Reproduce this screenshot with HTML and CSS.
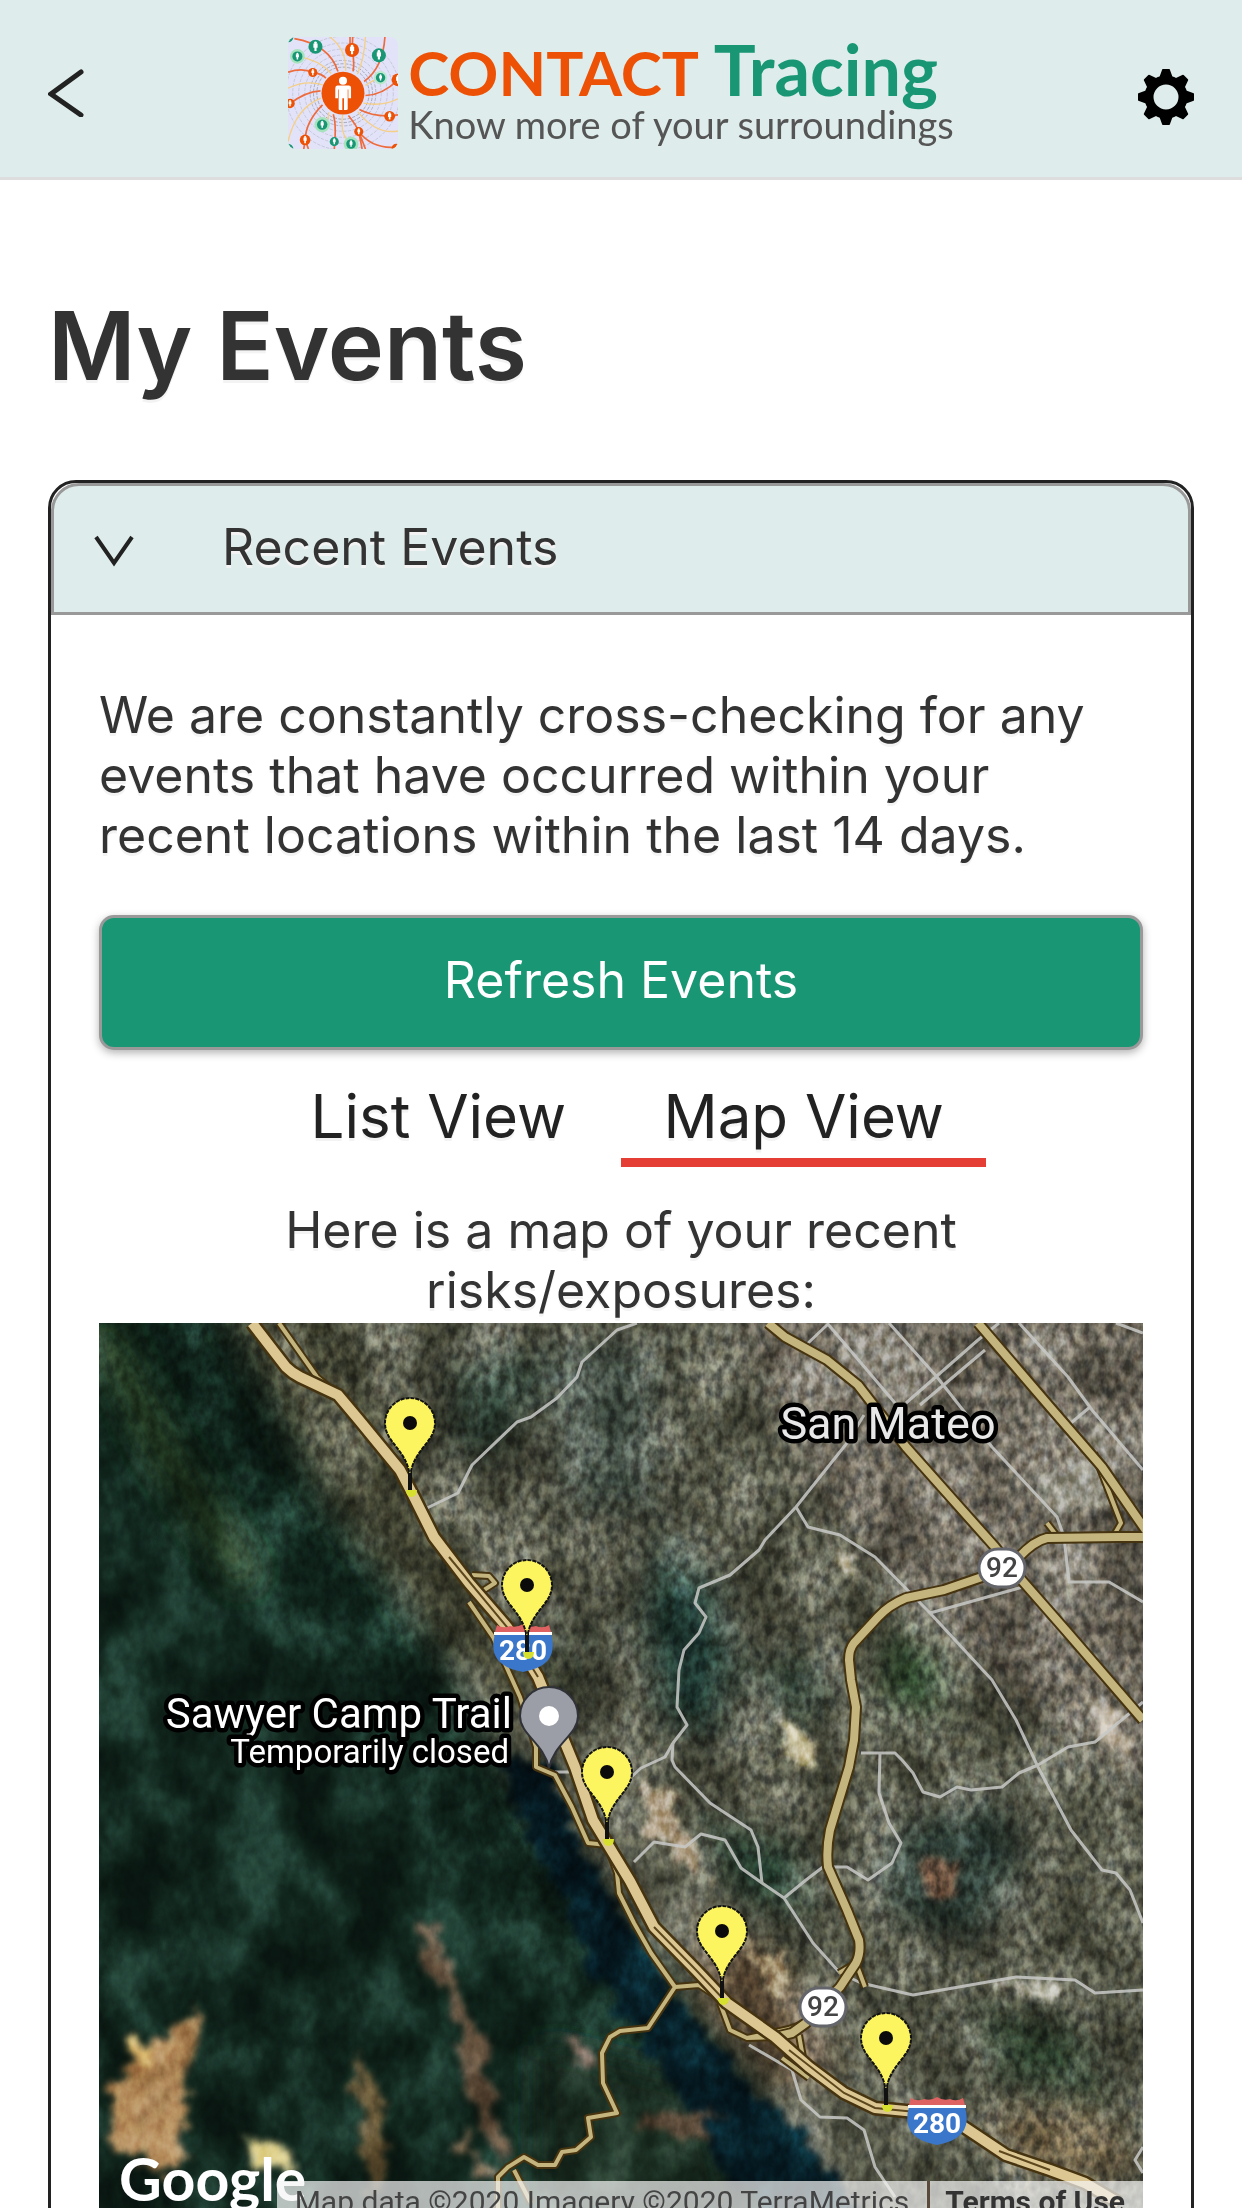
FILE: index.html
```html
<!DOCTYPE html>
<html lang="en">
<head>
    <meta charset="UTF-8">
    <meta name="viewport" content="width=device-width, initial-scale=1">
    <title>My Events</title>
    <link rel="stylesheet" href="styles.css">
</head>
<body>
<header class="header">
    <button class="icon-btn back" type="button" aria-label="Back">
        <svg width="36" height="48" viewBox="0 0 36 48"><path d="M33 3L3 25L33 46" fill="none" stroke="#222" stroke-width="5" stroke-linecap="round"/></svg>
    </button>
    <div class="logo">
        <svg class="logo-mark" width="110" height="112" viewBox="37 37 328 335" preserveAspectRatio="none">
            <defs>
                <clipPath id="logoClip"><rect x="37" y="37" width="328" height="335" rx="24"/></clipPath>
                <g id="person"><circle r="20"/><path d="M-6 -9H6V3H3V12H-3V3H-6Z" fill="#fff"/><circle cy="-11" r="4" fill="#fff"/></g>
            </defs>
            <g clip-path="url(#logoClip)">
                <rect x="37" y="37" width="328" height="335" fill="#e2e3f9"/>
                <g fill="none" stroke="#b9bccb" stroke-width="2" stroke-dasharray="10 4">
                    <circle cx="201" cy="205" r="78" stroke="#8c8e9b"/><circle cx="201" cy="205" r="88" stroke="#8c8e9b"/><circle cx="201" cy="205" r="98" stroke="#9c9eab"/>
                    <circle cx="201" cy="205" r="114"/><circle cx="201" cy="205" r="132"/><circle cx="201" cy="205" r="150"/><circle cx="201" cy="205" r="170"/>
                </g>
                <g fill="none" stroke="#f6cf86" stroke-width="4">
                    <path d="M66 95Q130 105 166 146M162 37Q212 75 209 138M268 37Q265 100 244 148M37 190Q90 165 140 180M37 350Q60 250 135 220M262 235Q320 245 365 222M245 260Q300 330 365 318M200 270Q190 330 225 357M140 300Q160 290 158 262M313 160Q290 165 268 182"/>
                </g>
                <g fill="none" stroke="#ee6b3d" stroke-width="5">
                    <path d="M56 42Q160 60 186 140M228 76Q236 110 231 140M222 37V76M230 37L228 76M326 37Q320 130 264 170M37 142Q80 128 111 143Q140 148 150 160M268 212Q320 210 365 165M134 198Q90 200 43 236M250 254Q300 280 365 270M140 240Q90 290 88 345M84 372L88 345L98 372M172 268Q182 300 175 372M217 272Q240 300 248 320Q290 375 365 366M248 320L258 372M248 320L268 372"/>
                </g>
                <g fill="#199775">
                    <circle cx="65" cy="95" r="22" fill="#a5e3bd"/><circle cx="139" cy="299" r="23" fill="#a5e3bd"/><circle cx="225" cy="357" r="22" fill="#a5e3bd"/><circle cx="313" cy="159" r="20" fill="#b9e8cd"/>
                    <use href="#person" transform="translate(119 66) scale(1.05)"/>
                    <use href="#person" transform="translate(65 95) scale(.75)"/>
                    <use href="#person" transform="translate(308 92) scale(1.05)"/>
                    <use href="#person" transform="translate(313 159) scale(.7)"/>
                    <use href="#person" transform="translate(139 299) scale(.78)"/>
                    <use href="#person" transform="translate(175 350) scale(.68)"/>
                    <use href="#person" transform="translate(225 357) scale(.72)"/>
                    <circle cx="37" cy="372" r="16"/><circle cx="37" cy="37" r="16"/>
                </g>
                <g fill="#ec5105">
                    <use href="#person" transform="translate(228 76) scale(1.05)"/>
                    <use href="#person" transform="translate(111 143) scale(.68)"/>
                    <use href="#person" transform="translate(365 165) scale(.95)"/>
                    <use href="#person" transform="translate(43 236) scale(.7)"/>
                    <use href="#person" transform="translate(340 274) scale(.8)"/>
                    <use href="#person" transform="translate(88 345) scale(.8)"/>
                    <use href="#person" transform="translate(248 320) scale(.68)"/>
                    <circle cx="360" cy="370" r="14"/>
                    <circle cx="201" cy="205" r="64"/>
                </g>
                <circle cx="201" cy="168" r="12" fill="#fff"/>
                <path d="M184 182H218Q225 182 225 190V220H217V194H215V252Q215 255 211 255H204V220H199V255H191Q188 255 188 252V194H186V220H178V190Q178 182 184 182Z" fill="#fff"/>
            </g>
        </svg>
        <div class="logo-text">
            <div class="logo-name"><span class="orange">CONTACT</span> Tracing</div>
            <div class="logo-tag">Know more of your surroundings</div>
        </div>
    </div>
    <button class="icon-btn settings" type="button" aria-label="Settings">
        <svg width="56" height="56" viewBox="-28 -28 56 56">
            <defs><path id="tooth" d="M-8 -16L-4 -27Q-4 -28 -3 -28H3Q4 -28 4 -27L8 -16Z"/></defs>
            <circle r="17" fill="none" stroke="#000" stroke-width="9"/>
            <use href="#tooth"/><use href="#tooth" transform="rotate(45)"/><use href="#tooth" transform="rotate(90)"/><use href="#tooth" transform="rotate(135)"/>
            <use href="#tooth" transform="rotate(180)"/><use href="#tooth" transform="rotate(225)"/><use href="#tooth" transform="rotate(270)"/><use href="#tooth" transform="rotate(315)"/>
        </svg>
    </button>
</header>

<main class="content">
    <h1>My Events</h1>

    <section class="card">
        <button class="card-head" type="button" aria-expanded="true">
            <svg width="40" height="32" viewBox="0 0 40 32"><path d="M2 2L20 28L38 2" fill="none" stroke="#222" stroke-width="4"/></svg>
            <span>Recent Events</span>
        </button>
        <div class="card-body">
            <p class="intro">We are constantly cross-checking for any events that have occurred within your recent locations within the last 14 days.</p>
            <button class="refresh" type="button">Refresh Events</button>
            <div class="tabs">
                <button class="tab" type="button">List View</button>
                <button class="tab active" type="button">Map View</button>
            </div>
            <p class="caption">Here is a map of your recent risks/exposures:</p>
            <div class="map">
                <svg viewBox="0 0 1044 900" role="img" aria-label="Map of recent exposures">
                    <defs>
                        <filter id="soft" x="-20%" y="-20%" width="140%" height="140%"><feGaussianBlur stdDeviation="16"/></filter>
                        <filter id="edge" x="-20%" y="-20%" width="140%" height="140%" color-interpolation-filters="sRGB">
                            <feTurbulence type="fractalNoise" baseFrequency="0.05" numOctaves="3" seed="4" result="n"/>
                            <feDisplacementMap in="SourceGraphic" in2="n" scale="34" xChannelSelector="R" yChannelSelector="G"/>
                            <feGaussianBlur stdDeviation="3"/>
                        </filter>
                        <filter id="grain" x="0" y="0" width="100%" height="100%" color-interpolation-filters="sRGB">
                            <feTurbulence type="fractalNoise" baseFrequency="0.12 0.08" numOctaves="3" seed="8"/>
                            <feColorMatrix values="2 .3 0 0 -.65  2 .1 0 0 -.55  2 0 .2 0 -.61  0 0 0 0 1"/>
                        </filter>
                        <filter id="terrain" x="0" y="0" width="100%" height="100%" color-interpolation-filters="sRGB">
                            <feTurbulence type="fractalNoise" baseFrequency="0.016 0.012" numOctaves="4" seed="21"/>
                            <feColorMatrix values="2.4 0 0 0 -.72  2.4 0 0 0 -.72  2.4 0 0 0 -.72  0 0 0 0 1"/>
                        </filter>
                        <linearGradient id="fade" x1="0" y1=".65" x2=".6" y2=".2">
                            <stop offset=".35" stop-color="#fff" stop-opacity=".3"/>
                            <stop offset=".7" stop-color="#fff"/>
                        </linearGradient>
                        <mask id="urban"><rect width="1044" height="900" fill="url(#fade)"/></mask>
                        <g id="pin">
                            <path d="M0 68V44" stroke="#111" stroke-width="4"/>
                            <path d="M0 54C-3 26 -25 20 -25 0A25 25 0 0 1 25 0C25 20 3 26 0 54Z" fill="#fcf55f" stroke="#111" stroke-width="2" stroke-dasharray="4 1"/>
                            <circle r="7" fill="#0b0b0b"/>
                            <path d="M-4 67H7Q7 74 1 74Q-4 73 -4 67Z" fill="#d8e02f"/>
                        </g>
                        <g id="i280">
                            <path d="M-28 10H28Q36 38 8 46L0 48L-8 46Q-36 38 -28 10Z" fill="#3a77ca"/>
                            <path d="M-28 8L-26 1Q-20 5 -13 2Q-6 4 0 0Q6 4 13 2Q20 5 26 1L28 8Z" fill="#df6262"/>
                            <path d="M-29 8H29V11H-29Z" fill="#fff"/>
                            <text class="shield" x="0" y="36">280</text>
                        </g>
                        <g id="r92">
                            <rect x="-23" y="-19" width="46" height="38" rx="19" fill="#fff" stroke="#63656b" stroke-width="3"/>
                            <text class="route" x="0" y="9">92</text>
                        </g>
                    </defs>

                    <!-- ground colours -->
                    <rect width="1044" height="900" fill="#11271e"/>
                    <g filter="url(#soft)">
                        <path d="M130 -40L260 180L400 430L520 590L640 740L760 960H1100V-40Z" fill="#5a5b4d"/>
                        <path d="M110 -40L230 180L350 330L430 420L480 400L300 120L230 -40Z" fill="#4c4d3a"/>
                        <path d="M0 0L60 120L150 260" stroke="#2a4328" stroke-width="30" fill="none"/>
                        <path d="M640 0L720 160L780 240L880 340L960 400L1100 500V-40H640Z" fill="#736e63"/>
                        <path d="M560 200L620 260L640 330L620 420L560 400L540 300Z" fill="#26423a"/>
                        <path d="M420 20L450 60L400 140L350 130L350 40Z" fill="#2f4035"/>
                        <path d="M640 340L720 320L740 380L690 420Z" fill="#2d3c32"/>
                        <path d="M790 300L850 340L840 400L780 380Z" fill="#304e33"/>
                        <path d="M800 500L900 470L930 540L880 620L800 600L770 560Z" fill="#32423a"/>
                        <path d="M860 680L980 700L1020 790L900 760Z" fill="#2d402f"/>
                        <path d="M590 490L700 520L720 600L640 580Z" fill="#274133"/>
                        <path d="M420 300L520 280L560 220L470 420Z" fill="#3d4236"/>
                        <path d="M440 20H560V190H470Z" fill="#414c42"/>
                        <path d="M600 590L680 640L740 740L690 770L600 690Z" fill="#6b5a45"/>
                        <path d="M880 790L1000 790L1044 850H940Z" fill="#6d5f45"/>
                        <path d="M440 720L600 760L640 900H440Z" fill="#20382a"/>
                    </g>
                    <g filter="url(#edge)">
                        <path d="M400 430L450 440L480 520L530 600L575 670L620 730L680 790L740 850L770 900H680L630 860L590 790L550 720L500 660L470 590L430 520Z" fill="#051a22"/>
                        <path d="M98 680L108 690L92 740L86 790L78 820L90 830L70 850L20 830L8 800L12 770L30 740L30 720L70 712Z" fill="#b8905f"/>
                        <path d="M30 720L58 718L40 745Z" fill="#e6cd8a"/>
                        <path d="M80 730L60 800M60 740L40 810M95 700L84 740" fill="none" stroke="#8a6238" stroke-width="6"/>
                        <path d="M150 820L168 815L194 830L190 850L155 848Z" fill="#e5d99b"/>
                        <path d="M318 600L335 600L350 650L385 720L395 780L412 840L395 835L370 770L360 700L325 640Z" fill="#6b5844"/>
                        <path d="M255 730L275 760L290 800L285 870H270L262 790Z" fill="#70603f"/>
                        <path d="M465 715L495 725L500 745L480 740Z" fill="#826a5d"/>
                        <path d="M365 800L380 840L400 845L385 860L360 820Z" fill="#88745a"/>
                        <path d="M545 455L570 470L590 520L610 560L580 540L550 500Z" fill="#b5a58c"/>
                        <path d="M680 390L715 420L710 450L685 430Z" fill="#d3ccae"/>
                        <path d="M640 610L690 640L690 680L650 640Z" fill="#b7a889"/>
                        <path d="M990 370L1020 400L1030 440L1000 410Z" fill="#c6bcac"/>
                        <path d="M820 535L860 535L850 575L825 570Z" fill="#79604d"/>
                        <path d="M540 790L620 790L590 815L540 815Z" fill="#5b4a39"/>
                        <path d="M735 220L755 235L755 255L740 245Z" fill="#c9c2ab"/>
                        <path d="M935 160L980 140L1010 150L1000 190L950 190Z" fill="#98968a"/>
                        <path d="M890 655L960 660L965 675L900 670Z" fill="#b6b4a5"/>
                    </g>
                    <rect class="relief" width="1044" height="900" filter="url(#terrain)"/>
                    <g mask="url(#urban)" class="noise"><rect width="1044" height="900" filter="url(#grain)"/></g>

                    <!-- small streets -->
                    <g class="street">
                        <path d="M538 0L518 7L483 39L478 54L458 75L432 94L418 99L373 142L359 170L328 185"/>
                        <path d="M765 92L748 120L697 184L666 217L660 227L631 252L600 265L596 280L607 294L600 310L585 327L580 347L578 384L588 402L574 420L566 434L542 445L528 458"/>
                        <path d="M574 420L573 437L576 444L611 480L652 507L659 524L663 560"/>
                        <path d="M697 184L709 204L741 212L776 234L831 290L893 357L917 397L939 444L972 507L1003 547L1017 550L1031 567L1044 600"/>
                        <path d="M831 290L924 264M728 0L796 80M728 2L707 22"/>
                        <path d="M790 0L838 54L893 124L958 194L965 214L970 259H1010L1044 279"/>
                        <path d="M807 80L879 17L900 0M821 82L886 27"/>
                        <path d="M920 0L969 54L993 87L1044 147M991 84L972 100M1017 0L1044 10"/>
                        <path d="M1044 379L1031 390L996 419L969 424L939 442L920 450L903 464L872 467L858 464L841 474L824 469L814 450L803 437L796 430H762"/>
                        <path d="M781 430L780 470L790 500L802 520L793 540L769 557L748 544H724L707 557L685 575"/>
                        <path d="M535 539L555 519L586 524L602 511L626 517L642 545L663 560L685 575L714 620L741 650L762 660L814 672L917 654L976 657L996 670L1044 667"/>
                        <path d="M650 722L693 747L702 777L721 794L748 795L765 807L776 844L796 874M1044 824L1036 837L1044 850M456 449H475"/>
                    </g>

                    <!-- ramps and side roads: dark casing first, then the fill -->
                    <g class="minor-case">
                        <path id="minor" d="M180 0L218 54L239 72M370 279L394 314L421 374L437 424V444L456 452L473 484L489 520L508 522L518 550L520 570L535 600L552 630L576 664L600 662L628 680M576 664L549 705L521 708L511 714L503 730L504 760L518 790L489 795L492 814L477 827L463 829L456 842H439L425 834L409 844L399 854V885M415 847L432 880M373 252L390 253L396 260L385 267M621 680L631 707L648 715L676 714M648 715L690 706L707 700M740 650L757 640L766 664M683 735L710 755M700 712L705 740M995 130L1022 200L1015 212M948 200L958 213"/>
                    </g>
                    <g class="minor-fill"><use href="#minor"/></g>

                    <!-- highways -->
                    <g class="road-case">
                        <path id="camino" d="M669 0L686 14L728 37L759 62L776 84L807 124L896 224L920 254L969 310L1044 397"/>
                        <path id="bayshore" d="M879 0L951 84L1003 144L1050 212"/>
                        <path id="sr92" d="M1044 214L1020 214L948 215Q935 218 920 234L883 254L845 267L807 275Q790 282 779 294L755 320Q750 326 750 337L752 357L757 384L755 417L750 444L731 507Q727 526 729 544L748 587L760 617Q762 630 757 640L741 664L707 700L693 710L676 714"/>
                    </g>
                    <g class="road-fill"><use href="#camino"/><use href="#bayshore"/><use href="#sr92"/></g>
                    <g class="hwy-case">
                        <path id="hwy" d="M153 0L187 44Q193 50 201 54L239 72L260 97L301 147L315 174L335 214L370 260L408 304L439 354L476 444L494 497L531 558L555 604L597 647L628 680L676 714L710 744L745 770L776 785L817 789L865 804L907 832L951 847L986 860L1020 880"/>
                    </g>
                    <g class="hwy-fill"><use href="#hwy"/></g>
                    <path class="hwy-split" d="M350 234L408 304L439 354M555 604L597 647L628 680M690 727L745 770L776 785L817 789M900 828L951 847"/>

                    <use href="#i280" x="424" y="301"/>
                    <use href="#i280" x="838" y="774"/>
                    <use href="#r92" x="903" y="245"/>
                    <use href="#r92" x="724" y="684"/>

                    <path d="M450 445C445 420 421 412 421 393A29 29 0 0 1 479 393C479 412 455 420 450 445Z" fill="#9b9da7" stroke="#303238" stroke-width="2"/>
                    <circle cx="450" cy="393" r="10" fill="#fff"/>

                    <text class="place city" x="789" y="116">San Mateo</text>
                    <text class="place trail" x="413" y="405">Sawyer Camp Trail</text>
                    <text class="place note" x="410" y="440">Temporarily closed</text>

                    <use href="#pin" x="311" y="100"/>
                    <use href="#pin" x="428" y="262"/>
                    <use href="#pin" x="508" y="449"/>
                    <use href="#pin" x="623" y="608"/>
                    <use href="#pin" x="787" y="715"/>

                    <text class="google" x="20" y="878">Google</text>
                </svg>
                <div class="map-legal">
                    <span>Map data ©2020 Imagery ©2020 TerraMetrics</span>
                    <a href="#terms">Terms of Use</a>
                </div>
            </div>
        </div>
    </section>
</main>
</body>
</html>
```
FILE: styles.css
```css
*{
    margin: 0;
    padding: 0;
    box-sizing: border-box;
}
body{
    display: flex;
    flex-direction: column;
    height: 100vh;
    background: #fff;
    color: #333;
    font-family: Inter, "Open Sans", sans-serif;
    font-size: 50px;
    line-height: 60px;
    text-shadow: 0 3px 0 #f3f3f3;
}
button{
    font: inherit;
    color: inherit;
    text-shadow: inherit;
    background: none;
    border: 0;
    cursor: pointer;
}
svg{
    display: block;
}

/* header */
.header{
    display: flex;
    flex: none;
    align-items: center;
    justify-content: space-between;
    height: 180px;
    padding: 0 48px;
    background: #deedeb;
    border-bottom: 3px solid #ddd;
    text-shadow: none;
}
.icon-btn{
    display: flex;
    align-items: center;
    width: 96px;
    height: 96px;
}
.back{
    padding-top: 8px;
}
.settings{
    justify-content: flex-end;
    padding-top: 16px;
}
.logo{
    display: flex;
    align-items: center;
    gap: 10px;
    padding-top: 8px;
}
.logo-text{
    padding-bottom: 4px;
    font-family: Lato, sans-serif;
    white-space: nowrap;
}
.logo-name{
    font-size: 70px;
    line-height: 64px;
    font-weight: 700;
    color: #199775;
}
.orange{
    color: #ec5105;
    font-size: 62px;
}
.logo-tag{
    font-size: 38px;
    line-height: 40px;
    color: #555;
}

/* page */
.content{
    flex: 1;
    min-height: 0;
    overflow-y: auto;
    scrollbar-width: none;
    padding: 106px 48px 48px;
}
h1{
    font-size: 95px;
    line-height: 120px;
    font-weight: 600;
}
.card{
    margin-top: 74px;
    border: 3px solid #222;
    border-radius: 28px;
}
.card-head{
    display: flex;
    align-items: center;
    gap: 88px;
    width: 100%;
    height: 132px;
    padding: 0 40px;
    background: #deedeb;
    border: 3px solid #999;
    border-radius: 28px 28px 0 0;
}
.card-head svg{
    margin-top: 4px;
}
.card-head span{
    padding-bottom: 4px;
}
.card-body{
    padding: 70px 48px 48px;
}
.refresh{
    display: block;
    width: 100%;
    height: 135px;
    margin-top: 50px;
    padding-bottom: 6px;
    background: #199775;
    border: 3px solid #999;
    border-radius: 15px;
    box-shadow: 0 3px 9px rgba(0, 0, 0, .3);
    color: #fff;
    text-shadow: none;
}
.tabs{
    display: flex;
    justify-content: center;
    margin-top: 24px;
}
.tab{
    width: 35%;
    height: 93px;
    border-bottom: 9px solid transparent;
    color: #222;
    font-size: 60px;
    white-space: nowrap;
}
.tab.active{
    border-color: #e53e35;
}
.caption{
    padding: 33px 120px 0;
    text-align: center;
}

/* map */
.map{
    position: relative;
    margin-top: 3px;
    overflow: hidden;
    text-shadow: none;
    font-family: Roboto, sans-serif;
}
.map > svg{
    width: 100%;
    height: auto;
}
.relief{
    mix-blend-mode: soft-light;
    opacity: .5;
}
.noise{
    mix-blend-mode: overlay;
    opacity: .4;
}
.street{
    fill: none;
    stroke: #c9cac8;
    stroke-width: 3;
    stroke-linejoin: round;
    opacity: .85;
}
.minor-case, .road-case, .hwy-case{
    fill: none;
    stroke: #46330f;
    stroke-width: 8;
    stroke-linejoin: round;
}
.road-case{
    stroke-width: 12;
}
.hwy-case{
    stroke-width: 15;
}
.minor-fill, .road-fill, .hwy-fill{
    fill: none;
    stroke: #c4b57e;
    stroke-width: 4;
    stroke-linejoin: round;
}
.road-fill{
    stroke-width: 8;
}
.hwy-fill{
    stroke: #dcc792;
    stroke-width: 10;
}
.hwy-split{
    fill: none;
    stroke: #5c461c;
    stroke-width: 2;
}
.place{
    fill: #fff;
    stroke: #000;
    stroke-width: 9;
    stroke-linejoin: round;
    paint-order: stroke;
    text-anchor: end;
}
.city{
    font-size: 45px;
    fill: #e8e8e8;
    text-anchor: middle;
}
.trail{
    font-size: 42px;
}
.note{
    font-size: 33px;
}
.shield, .route{
    font-size: 28px;
    font-weight: 700;
    fill: #fff;
    text-anchor: middle;
}
.route{
    font-weight: 500;
    fill: #444;
}
.google{
    font-family: Lato, sans-serif;
    font-size: 59px;
    font-weight: 700;
    fill: #fff;
}
.map-legal{
    position: absolute;
    right: 0;
    bottom: 0;
    display: flex;
    padding-left: 18px;
    background: rgba(245, 245, 245, .7);
    color: #444;
    font-size: 30px;
    line-height: 42px;
    white-space: nowrap;
}
.map-legal a{
    margin-left: 18px;
    padding: 0 18px 0 15px;
    border-left: 3px solid #5a4a3c;
    color: #333;
    font-weight: 700;
    text-decoration: none;
}
```
